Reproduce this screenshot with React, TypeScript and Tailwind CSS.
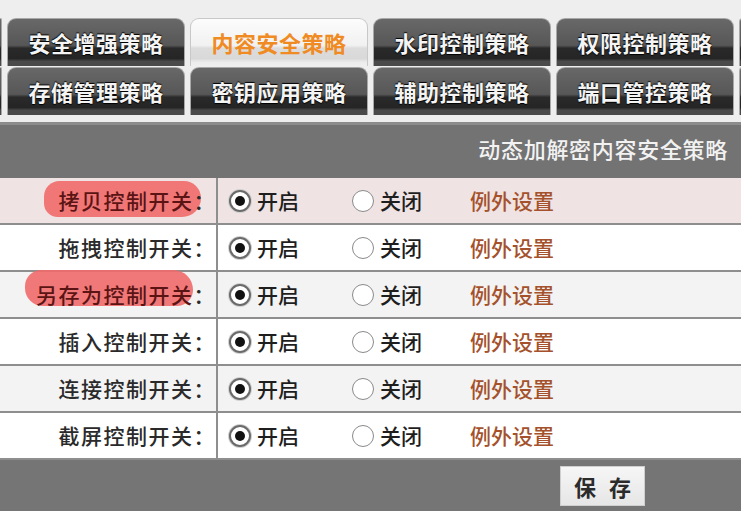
import React from "react";

const FONT = { fontFamily: '"Noto Sans CJK SC", "Noto Sans", sans-serif' };

const darkTab =
  "bg-[linear-gradient(to_bottom,#686868_0%,#575757_56%,#2a2a2a_62%,#252525_84%,#4a4a4a_90%,#4a4a4a_100%)] text-[#f4f4f4] [text-shadow:0_1px_1px_#000,0_-1px_1px_#000] border-[#a8a8a8]";
const lightTab =
  "bg-[linear-gradient(to_bottom,#fcfcfc_0%,#f1f1f1_56%,#dcdcdc_62%,#d9d9d9_84%,#ececec_92%,#efefef_100%)] text-[#f08a22] border-[#c8c8c8]";

function Tab({ label, active }: { label: string; active?: boolean }) {
  return (
    <div
      className={`w-[178px] h-[48px] shrink-0 rounded-t-[9px] border border-b-0 flex items-center justify-center text-[22px] font-bold tracking-[0.5px] ${
        active ? lightTab : darkTab
      }`}
    >
      {label}
    </div>
  );
}

function Partial({ w }: { w: number }) {
  return (
    <div
      className={`h-[48px] shrink-0 border border-b-0 ${darkTab} ${
        w === 2 ? "w-[2px] border-l-0 rounded-tr-[2px]" : "w-[4px] border-r-0 rounded-tl-[4px]"
      }`}
    />
  );
}

function Radio({ checked }: { checked?: boolean }) {
  return (
    <span
      className={`w-[22px] h-[22px] rounded-full bg-white flex items-center justify-center shrink-0 ${
        checked
          ? "border-[2px] border-[#6a6a6a] shadow-[0_0_0_1px_#d0d0d0]"
          : "border-[1.5px] border-[#8a8a8a]"
      }`}
    >
      {checked && <span className="w-[10px] h-[10px] rounded-full bg-[#111]" />}
    </span>
  );
}

type Row = {
  label: string;
  bg: string;
  mark?: { cls: string };
};

const rows: Row[] = [
  {
    label: "拷贝控制开关",
    bg: "bg-[#efe3e3]",
    mark: { cls: "left-[44px] top-[3px] w-[157px] h-[36px] rounded-[18px_20px_22px_16px]" },
  },
  { label: "拖拽控制开关", bg: "bg-white" },
  {
    label: "另存为控制开关",
    bg: "bg-[#f3f3f3]",
    mark: { cls: "left-[25px] top-[-2px] w-[168px] h-[36px] rounded-[18px_22px_18px_20px]" },
  },
  { label: "插入控制开关", bg: "bg-white" },
  { label: "连接控制开关", bg: "bg-[#f3f3f3]" },
  { label: "截屏控制开关", bg: "bg-white" },
];

export default function App() {
  return (
    <div className="w-[741px] h-[511px] overflow-hidden bg-[#eeeeee] flex flex-col" style={FONT}>
      {/* tabs */}
      <div className="pt-[18px] flex flex-col gap-[1px]">
        <div className="flex gap-[5px]">
          <Partial w={2} />
          <Tab label="安全增强策略" />
          <Tab label="内容安全策略" active />
          <Tab label="水印控制策略" />
          <Tab label="权限控制策略" />
          <Partial w={4} />
        </div>
        <div className="flex gap-[5px]">
          <Partial w={2} />
          <Tab label="存储管理策略" />
          <Tab label="密钥应用策略" />
          <Tab label="辅助控制策略" />
          <Tab label="端口管控策略" />
          <Partial w={4} />
        </div>
      </div>

      <div className="mt-[7px] border-t-[3px] border-[#8c8c8c]" />

      {/* header */}
      <div className="h-[53px] bg-[#737373] flex items-center justify-end pr-[13px] pb-[6px] text-[22px] font-medium tracking-[0.7px] text-[#f2f2f2]">
        动态加解密内容安全策略
      </div>

      {/* rows */}
      <div className="flex flex-col">
        {rows.map((r, i) => (
          <div
            key={i}
            className={`h-[47px] flex border-b-2 border-[#8e8e8e] ${r.bg}`}
          >
            <div className="relative w-[218px] shrink-0 border-r-2 border-[#8e8e8e] flex items-center justify-end">
              {r.mark && (
                <span className={`absolute bg-[#f16a6a] opacity-90 ${r.mark.cls}`} />
              )}
              <span
                className={`relative text-[21px] tracking-[1.5px] font-medium ${
                  r.mark ? "text-[#5a1414]" : "text-[#2a2a2a]"
                }`}
              >
                {r.label}
                <span className="text-[#2a2a2a]">：</span>
              </span>
            </div>
            <div className="flex items-center pl-[11px] text-[21px] font-medium text-[#1e1e1e]">
              <div className="w-[123px] flex items-center gap-[6px]">
                <Radio checked />
                <span>开启</span>
              </div>
              <div className="w-[118px] flex items-center gap-[6px]">
                <Radio />
                <span>关闭</span>
              </div>
              <span className="text-[#a4512c]">例外设置</span>
            </div>
          </div>
        ))}
      </div>

      {/* footer */}
      <div className="flex-1 bg-[#757575] pl-[560px] pt-[6px]">
        <button className="w-[85px] h-[40px] bg-[linear-gradient(to_bottom,#f6f6f6,#e6e6e6)] border border-[#cfcfcf] flex items-center justify-center gap-[13px] text-[22px] font-bold text-[#2b2b2b]">
          <span>保</span>
          <span>存</span>
        </button>
      </div>
    </div>
  );
}
